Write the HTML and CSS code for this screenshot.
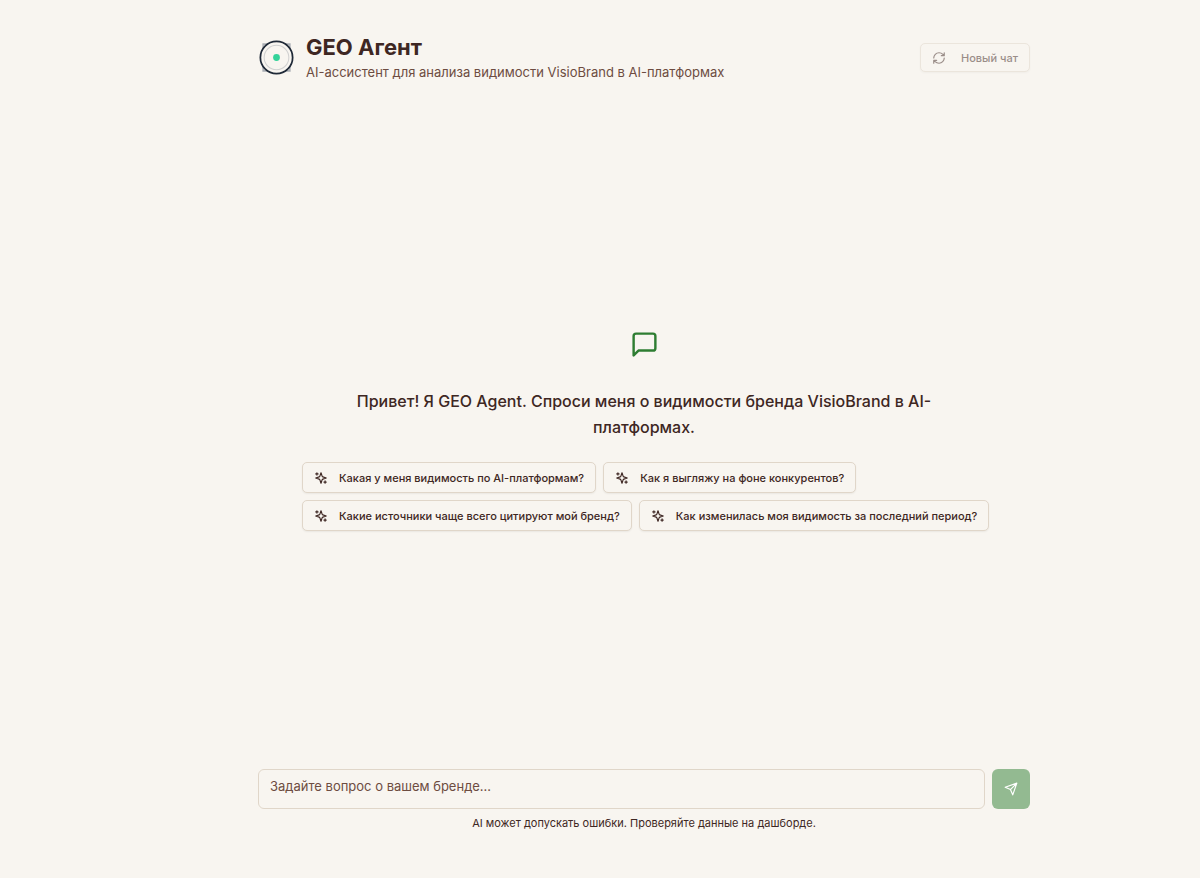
FILE: index.html
```html
<!DOCTYPE html>
<html lang="ru">
<head>
<meta charset="utf-8">
<meta name="viewport" content="width=device-width, initial-scale=1">
<title>GEO Агент</title>
<link rel="stylesheet" href="styles.css">
</head>
<body>
<svg class="defs" aria-hidden="true">
  <symbol id="sparkles" viewBox="0 0 24 24">
    <path d="m12 3-1.91 5.81a2 2 0 0 1-1.28 1.28L3 12l5.81 1.91a2 2 0 0 1 1.28 1.28L12 21l1.91-5.81a2 2 0 0 1 1.28-1.28L21 12l-5.81-1.91a2 2 0 0 1-1.28-1.28z"/>
    <path d="M5 3v4M19 17v4M3 5h4M17 19h4"/>
  </symbol>
</svg>
<main class="page">
  <header class="header">
    <svg class="logo" viewBox="0 0 36 36" fill="none" aria-hidden="true">
      <path d="M5 9V5h4M27 5h4v4M31 27v4h-4M9 31H5v-4" stroke="#a9adb3" stroke-width="1.5"/>
      <circle cx="18" cy="18" r="15.7" fill="#f8f5f0" stroke="#1f2937" stroke-width="1.7"/>
      <circle cx="18" cy="18" r="12" stroke="#d0d0d0" stroke-width="1"/>
      <circle cx="18" cy="18" r="3.3" fill="#34d399"/>
    </svg>
    <div class="heading">
      <h1 class="title">GEO Агент</h1>
      <p class="subtitle">AI-ассистент для анализа видимости VisioBrand в AI-платформах</p>
    </div>
    <button class="button button-reset" type="button" disabled>
      <svg class="icon" viewBox="0 0 24 24" aria-hidden="true"><path d="M3 12a9 9 0 0 1 9-9 9.75 9.75 0 0 1 6.74 2.74L21 8M21 3v5h-5M21 12a9 9 0 0 1-9 9 9.75 9.75 0 0 1-6.74-2.74L3 16M8 16H3v5"/></svg>
      Новый чат
    </button>
  </header>
  <section class="welcome">
    <svg class="icon welcome-icon" viewBox="0 0 24 24" aria-hidden="true"><path d="M21 15a2 2 0 0 1-2 2H7l-4 4V5a2 2 0 0 1 2-2h14a2 2 0 0 1 2 2z"/></svg>
    <p class="greeting">Привет! Я GEO Agent. Спроси меня о видимости бренда VisioBrand в AI-платформах.</p>
    <div class="suggestions">
      <button class="button" type="button"><svg class="icon" aria-hidden="true"><use href="#sparkles"/></svg>Какая у меня видимость по AI-платформам?</button>
      <button class="button" type="button"><svg class="icon" aria-hidden="true"><use href="#sparkles"/></svg>Как я выгляжу на фоне конкурентов?</button>
      <button class="button" type="button"><svg class="icon" aria-hidden="true"><use href="#sparkles"/></svg>Какие источники чаще всего цитируют мой бренд?</button>
      <button class="button" type="button"><svg class="icon" aria-hidden="true"><use href="#sparkles"/></svg>Как изменилась моя видимость за последний период?</button>
    </div>
  </section>
  <form class="composer">
    <textarea class="question" rows="1" aria-label="Вопрос" placeholder="Задайте вопрос о вашем бренде..."></textarea>
    <button class="send" type="button" aria-label="Отправить" disabled>
      <svg class="icon" viewBox="0 0 24 24" aria-hidden="true"><path d="M22 2 11 13M22 2l-7 20-4-9-9-4z"/></svg>
    </button>
  </form>
  <p class="note">AI может допускать ошибки. Проверяйте данные на дашборде.</p>
</main>
</body>
</html>
```
FILE: styles.css
```css
* { box-sizing: border-box; }

body {
  margin: 0;
  padding-left: 88px;
  background: #f8f5f0;
  color: #3e2723;
  font-family: Inter, "Noto Sans", sans-serif;
}

h1, p { margin: 0; }

.defs { position: absolute; width: 0; height: 0; }

.page {
  display: flex;
  flex-direction: column;
  max-width: 772px;
  min-height: 100vh;
  margin: 0 auto;
  padding: 33px 0 47px;
}

.header { display: flex; align-items: center; gap: 11px; }
.logo { flex: none; width: 37px; height: 37px; }
.heading { flex: 1; }
.title { font-size: 22px; line-height: 29px; font-weight: 700; }
.subtitle { font-size: 13px; line-height: 20px; color: #6d4c41; }

.icon {
  flex: none;
  width: 14px;
  height: 14px;
  fill: none;
  stroke: currentColor;
  stroke-width: 2;
  stroke-linecap: round;
  stroke-linejoin: round;
}

.button {
  display: flex;
  align-items: center;
  gap: 11px;
  height: 31px;
  padding: 0 11px;
  border: 1px solid #e0d6c9;
  border-radius: 5px;
  background: #f8f5f0;
  box-shadow: 0 1px 2px rgb(0 0 0 / 6%);
  color: inherit;
  font: 500 11px/16px Inter, "Noto Sans", sans-serif;
  white-space: nowrap;
}

.button-reset { gap: 15px; height: 29px; opacity: .5; }

.welcome {
  flex: 1;
  display: flex;
  flex-direction: column;
  align-items: center;
  justify-content: center;
  padding: 10px 36px 0;
}
.welcome-icon { width: 29px; height: 29px; color: #2e7d32; }
.greeting {
  max-width: 600px;
  margin: 29px 0 22px;
  font-size: 16px;
  line-height: 26px;
  font-weight: 500;
  text-align: center;
}
.suggestions { display: flex; flex-wrap: wrap; gap: 7px; width: 100%; padding-left: 8px; }

.composer { display: flex; gap: 7px; }
.question {
  flex: 1;
  height: 40px;
  padding: 7px 11px;
  border: 1px solid #e0d6c9;
  border-radius: 6px;
  background: transparent;
  color: inherit;
  font: 400 13px/19px Inter, "Noto Sans", sans-serif;
  resize: none;
}
.question::placeholder { color: #6d4c41; opacity: 1; }
.send {
  display: grid;
  place-items: center;
  width: 38px;
  padding: 0;
  border: 0;
  border-radius: 6px;
  background: #93ba91;
  color: #fff;
}
.note { margin-top: 6px; font-size: 11px; line-height: 16px; text-align: center; }
```
